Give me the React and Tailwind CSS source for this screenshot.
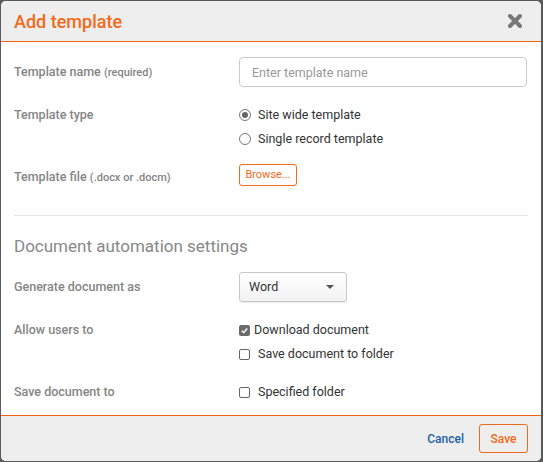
import React from 'react';

const label = "w-[225px] shrink-0 text-[12.5px] font-medium text-[#858585]";

function Radio({ checked, children }) {
  return (
    <label className="flex h-[20px] items-center gap-[7px] text-[12.5px] text-[#333]">
      <span className="flex h-[12px] w-[12px] items-center justify-center rounded-full border border-[#777] bg-white">
        {checked && <span className="h-[6px] w-[6px] rounded-full bg-[#666]" />}
      </span>
      {children}
    </label>
  );
}

function Check({ checked, children }) {
  return (
    <label className={`flex h-[20px] items-center text-[12.5px] text-[#333] ${checked ? 'gap-[4px]' : 'gap-[8px]'}`}>
      {checked ? (
        <span className="flex h-[11px] w-[11px] items-center justify-center rounded-[2px] bg-[#6b6b6b]">
          <svg viewBox="0 0 10 10" className="h-[9px] w-[9px]">
            <path d="M2 5.2 L4.2 7.3 L8 2.8" fill="none" stroke="#fff" strokeWidth="1.6" />
          </svg>
        </span>
      ) : (
        <span className="h-[11px] w-[11px] rounded-[2px] border border-[#666] bg-white" />
      )}
      {children}
    </label>
  );
}

export default function App() {
  return (
    <div className="h-[462px] w-[543px] bg-[#5a5a5a] pl-[1px] pt-[1px] font-['Roboto',sans-serif]">
      <div className="w-[540px] overflow-hidden rounded-[5px] bg-white">
        {/* Header */}
        <div className="flex h-[41px] items-center justify-between border-b border-[#f0620f] bg-[#eeeeee] pl-[13px] pr-[18px]">
          <h2 className="text-[18px] font-medium text-[#f26a1b]">Add template</h2>
          <svg viewBox="0 0 16 16" className="h-[16px] w-[16px]">
            <path d="M3 3 L13 13 M13 3 L3 13" stroke="#787878" strokeWidth="4" strokeLinecap="round" />
          </svg>
        </div>

        {/* Body */}
        <div className="px-[13px] pb-[13px] pt-[15px]">
          <div className="flex items-center">
            <div className={label}>
              Template name <span className="text-[11px]">(required)</span>
            </div>
            <input
              placeholder="Enter template name"
              className="h-[30px] w-[288px] rounded-[4px] border border-[#cccccc] px-[12px] text-[12.5px] text-[#333] placeholder:text-[#999] focus:outline-none"
            />
          </div>

          <div className="mt-[18px] flex">
            <div className={`${label} leading-[20px]`}>Template type</div>
            <div className="flex flex-col gap-[4px]">
              <Radio checked>Site wide template</Radio>
              <Radio>Single record template</Radio>
            </div>
          </div>

          <div className="mt-[15px] flex items-start">
            <div className={`${label} mt-[4px] leading-[18px]`}>
              Template file <span className="text-[11px]">(.docx or .docm)</span>
            </div>
            <button className="h-[22px] w-[58px] rounded-[3px] border border-[#f26a1b] bg-white text-[11px] text-[#f26a1b]">
              Browse...
            </button>
          </div>

          <div className="mt-[28px] h-px bg-[#e4e4e4]" />

          <h3 className="mt-[18px] text-[17px] leading-[24px] text-[#888]">Document automation settings</h3>

          <div className="mt-[14px] flex items-center">
            <div className={label}>Generate document as</div>
            <div className="flex h-[30px] w-[108px] items-center justify-between rounded-[3px] border border-[#c8c8c8] bg-gradient-to-b from-white to-[#f3f3f3] pl-[9px] pr-[12px] text-[12.5px] text-[#333] shadow-[0_1px_1px_rgba(0,0,0,0.08)]">
              Word
              <span className="h-0 w-0 border-x-[4px] border-t-[4px] border-x-transparent border-t-[#555]" />
            </div>
          </div>

          <div className="mt-[18px] flex">
            <div className={`${label} leading-[20px]`}>Allow users to</div>
            <div className="flex flex-col gap-[4px]">
              <Check checked>Download document</Check>
              <Check>Save document to folder</Check>
            </div>
          </div>

          <div className="mt-[18px] flex">
            <div className={`${label} leading-[20px]`}>Save document to</div>
            <Check>Specified folder</Check>
          </div>
        </div>

        {/* Footer */}
        <div className="flex items-center justify-end gap-[15px] border-t border-[#f0620f] bg-[#eeeeee] pb-[8px] pr-[13px] pt-[8px]">
          <button className="text-[12px] font-medium text-[#1f5fa6]">Cancel</button>
          <button className="h-[29px] w-[49px] rounded-[3px] border border-[#f26a1b] text-[12px] font-medium text-[#f26a1b]">
            Save
          </button>
        </div>
      </div>
    </div>
  );
}
